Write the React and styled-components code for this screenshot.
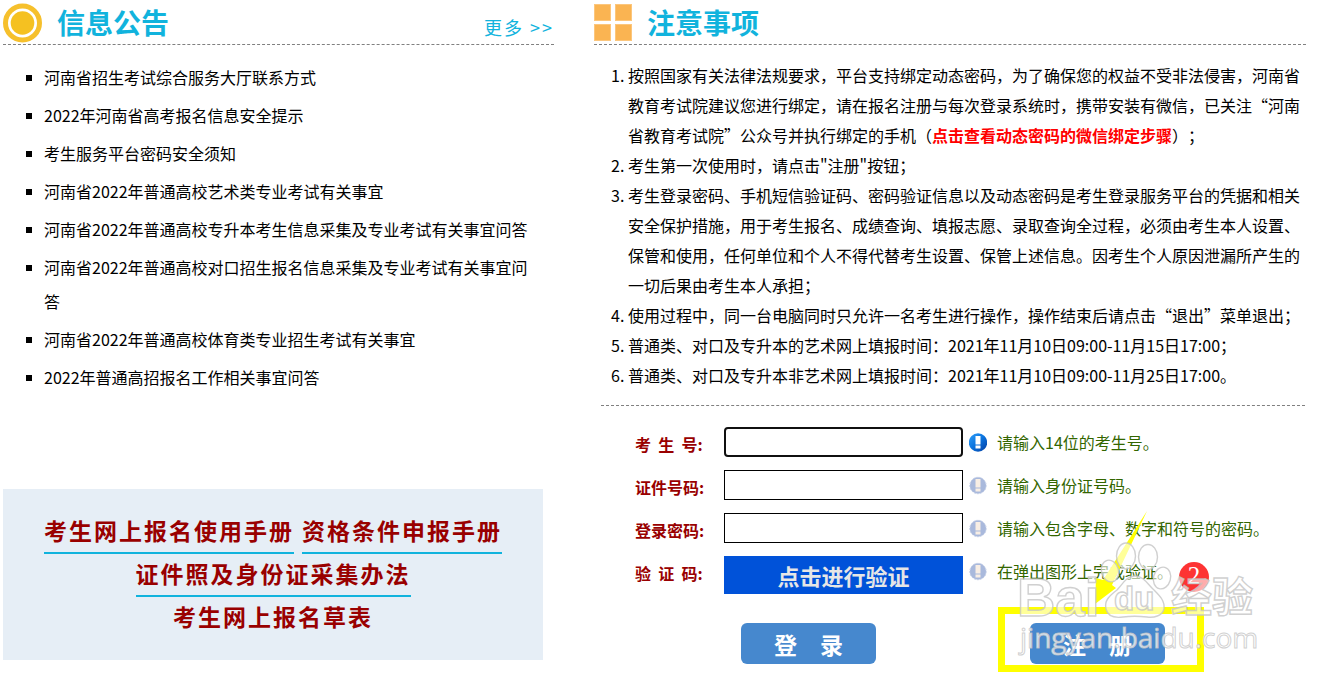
import React from "react";
import styled, { createGlobalStyle } from "styled-components";

const NOTICES = [
  "河南省招生考试综合服务大厅联系方式",
  "2022年河南省高考报名信息安全提示",
  "考生服务平台密码安全须知",
  "河南省2022年普通高校艺术类专业考试有关事宜",
  "河南省2022年普通高校专升本考生信息采集及专业考试有关事宜问答",
  "河南省2022年普通高校对口招生报名信息采集及专业考试有关事宜问答",
  "河南省2022年普通高校体育类专业招生考试有关事宜",
  "2022年普通高招报名工作相关事宜问答",
];

const SunIcon = () => (
  <svg width="39" height="40" viewBox="0 0 39 40" aria-hidden="true">
    <circle cx="19.5" cy="20" r="17" fill="#fff" stroke="#f6c02c" strokeWidth="5" />
    <circle cx="19.5" cy="20" r="11.8" fill="#f5c121" />
  </svg>
);

const BlocksIcon = () => (
  <svg width="38" height="39" viewBox="0 0 38 39" aria-hidden="true">
    <g fill="#fab452" stroke="#fcc67c" strokeWidth="1">
      <rect x="0.5" y="1.5" width="16" height="16" />
      <rect x="21.5" y="1.5" width="16" height="16" />
      <rect x="0.5" y="21.5" width="16" height="16" />
      <rect x="21.5" y="21.5" width="16" height="16" />
    </g>
  </svg>
);

const HintIcon = ({ active }) => (
  <svg width="18" height="30" viewBox="0 0 18 30" aria-hidden="true">
    <defs>
      <linearGradient id="hintBlue" x1="0" y1="0" x2="1" y2="1">
        <stop offset="0" stopColor="#2fa0fa" />
        <stop offset="0.5" stopColor="#0a72dd" />
        <stop offset="1" stopColor="#043c9f" />
      </linearGradient>
    </defs>
    <circle
      cx="9"
      cy="15.5"
      r={active ? 9.2 : 8.2}
      fill={active ? "url(#hintBlue)" : "#a9b9dc"}
      stroke={active ? "none" : "#c3cee6"}
      strokeDasharray="2 1"
    />
    <path
      d="M6.5 9h5v8.4h-5zM6.5 18.6h5v3h-5z"
      fill={active ? "#fff" : "#f8eee4"}
    />
  </svg>
);

const Watermark = () => (
  <svg width="260" height="130" viewBox="1010 535 260 130" aria-hidden="true">
    <g fill="#fff" fillOpacity="0.6" stroke="#c4c4c4" strokeOpacity="0.8" strokeWidth="1.4">
      <ellipse cx="1126" cy="556" rx="9.5" ry="13" />
      <ellipse cx="1148" cy="557" rx="9.5" ry="12.5" />
      <ellipse cx="1110" cy="571" rx="8.5" ry="11" transform="rotate(-15 1110 571)" />
      <ellipse cx="1162" cy="578" rx="8.5" ry="11" transform="rotate(15 1162 578)" />
      <path d="M1135 576c-9 0-12 8-18 14-8 6-13 11-11 19 2 8 10 9 17 8 8-1 15-1 24 0 7 1 15-1 17-8 1-8-4-13-10-19-6-5-10-14-19-14z" />
      <text x="1017" y="616" fontFamily="Liberation Sans, Arial, sans-serif" fontSize="53" fontWeight="700">
        Bai
      </text>
      <text x="1114" y="610" fontFamily="Liberation Sans, Arial, sans-serif" fontSize="33" fontWeight="700">
        du
      </text>
      <text x="1171" y="612" fontFamily="Noto Sans CJK SC, sans-serif" fontSize="41" fontWeight="700">
        经验
      </text>
      <text x="1020" y="648" fontFamily="Open Sans, sans-serif" fontSize="28" fillOpacity="0.75" strokeWidth="1">
        jingyan.baidu.com
      </text>
    </g>
  </svg>
);

const FormRow = ({ id, label, hint, active, type = "text" }) => (
  <Field>
    <Label htmlFor={id}>{label}</Label>
    <TextInput id={id} type={type} $active={active} />
    <HintIcon active={active} />
    <Hint>{hint}</Hint>
  </Field>
);

const App = () => (
  <>
    <GlobalStyle />
    <Page lang="zh-CN">
      <Column>
        <Header>
          <SunIcon />
          <Title>信息公告</Title>
          <MoreLink href="#more">更多 &gt;&gt;</MoreLink>
        </Header>
        <NoticeList>
          {NOTICES.map((notice) => (
            <li key={notice}>
              <a href="#notice">{notice}</a>
            </li>
          ))}
        </NoticeList>
        <Manuals>
          <ManualRow>
            <ManualLink href="#guide">考生网上报名使用手册</ManualLink>
            <ManualLink href="#qualification">资格条件申报手册</ManualLink>
          </ManualRow>
          <ManualRow>
            <ManualLink href="#photo">证件照及身份证采集办法</ManualLink>
          </ManualRow>
          <ManualRow>
            <ManualLink href="#draft" $plain>
              考生网上报名草表
            </ManualLink>
          </ManualRow>
        </Manuals>
      </Column>

      <Column>
        <Header>
          <BlocksIcon />
          <Title>注意事项</Title>
        </Header>
        <Rules>
          <li>
            按照国家有关法律法规要求，平台支持绑定动态密码，为了确保您的权益不受非法侵害，河南省教育考试院建议您进行绑定，请在报名注册与每次登录系统时，携带安装有微信，已关注“河南省教育考试院”公众号并执行绑定的手机（
            <BindLink href="#bind">点击查看动态密码的微信绑定步骤</BindLink>）；
          </li>
          <li>考生第一次使用时，请点击"注册"按钮；</li>
          <li>
            考生登录密码、手机短信验证码、密码验证信息以及动态密码是考生登录服务平台的凭据和相关安全保护措施，用于考生报名、成绩查询、填报志愿、录取查询全过程，必须由考生本人设置、保管和使用，任何单位和个人不得代替考生设置、保管上述信息。因考生个人原因泄漏所产生的一切后果由考生本人承担；
          </li>
          <li>使用过程中，同一台电脑同时只允许一名考生进行操作，操作结束后请点击“退出”菜单退出；</li>
          <li>普通类、对口及专升本的艺术网上填报时间：2021年11月10日09:00-11月15日17:00；</li>
          <li>普通类、对口及专升本非艺术网上填报时间：2021年11月10日09:00-11月25日17:00。</li>
        </Rules>
        <Form onSubmit={(e) => e.preventDefault()}>
          <FormRow id="ksh" label={"考\u00a0\u00a0生\u00a0\u00a0号:"} hint="请输入14位的考生号。" active />
          <FormRow id="zjhm" label="证件号码:" hint="请输入身份证号码。" />
          <FormRow id="dlmm" label="登录密码:" hint="请输入包含字母、数字和符号的密码。" type="password" />
          <Field>
            <Label htmlFor="yzm">{"验\u00a0\u00a0证\u00a0\u00a0码:"}</Label>
            <VerifyButton id="yzm" type="button">
              点击进行验证
            </VerifyButton>
            <HintIcon />
            <Hint>在弹出图形上完成验证。</Hint>
          </Field>
          <Actions>
            <ActionButton type="submit">登　录</ActionButton>
            <Register>
              <ActionButton type="button">注　册</ActionButton>
              <Frame />
              <Arrow width="56" height="96" viewBox="0 0 56 96" aria-hidden="true">
                <path d="M53 0 L9 69 L2 67 L1 93 L22 77 L18 74 Z" fill="#ff0" />
              </Arrow>
              <Badge>2</Badge>
              <WatermarkLayer>
                <Watermark />
              </WatermarkLayer>
            </Register>
          </Actions>
        </Form>
      </Column>
    </Page>
  </>
);

export default App;

const GlobalStyle = createGlobalStyle`
  * {
    box-sizing: border-box;
  }

  body {
    margin: 0;
    background-color: #fff;
    color: #000;
    font-family: "Noto Sans CJK SC", sans-serif;
    font-size: 16px;
    text-spacing-trim: space-all;
    overflow-x: hidden;
  }

  a {
    color: inherit;
    text-decoration: none;
  }

  button,
  input {
    font-family: inherit;
  }
`;

const Page = styled.main`
  display: grid;
  grid-template-columns: 551fr 712fr;
  column-gap: 40px;
  padding: 0 22px 20px 3px;
`;

const Column = styled.section`
  min-width: 0;
`;

const Header = styled.header`
  height: 45px;
  padding-top: 3px;
  display: flex;
  border-bottom: 1px dashed #808080;
`;

const Title = styled.h2`
  flex: 1;
  margin: 0 0 0 15px;
  color: #11b3dd;
  font-size: 28px;
  font-weight: bold;
  line-height: 38px;
`;

const MoreLink = styled.a`
  color: #11b3dd;
  font-size: 18px;
  letter-spacing: 2px;
  line-height: 48px;
`;

const NoticeList = styled.ul`
  list-style: none;
  margin: 15px 0 0;
  padding: 0 11px 0 41px;
  line-height: 34px;

  li {
    position: relative;
    margin-bottom: 4px;
  }

  li::before {
    content: "";
    position: absolute;
    top: 15px;
    left: -18px;
    width: 6px;
    height: 6px;
    background-color: #000;
  }
`;

const Manuals = styled.nav`
  margin: 95px 11px 0 0;
  padding: 22px 0 20px;
  background-color: #e6eef6;
`;

const ManualRow = styled.div`
  display: flex;
  justify-content: center;
  column-gap: 8px;
`;

const ManualLink = styled.a`
  color: #990000;
  font-size: 23px;
  font-weight: bold;
  letter-spacing: 2px;
  line-height: 39px;
  padding-bottom: 2px;
  border-bottom: 2px solid ${({ $plain }) => ($plain ? "transparent" : "#11b3dd")};
`;

const Rules = styled.ol`
  margin: 15px 0 0;
  padding: 0 0 0 34px;
  line-height: 30px;
`;

const BindLink = styled.a`
  color: #ff0000;
  font-weight: bold;
`;

const Form = styled.form`
  margin: 15px 1px 0 7px;
  padding: 21px 0 0 34px;
  border-top: 1px dashed #808080;
  display: flex;
  flex-direction: column;
  row-gap: 11px;
`;

const Field = styled.div`
  display: flex;
  align-items: flex-start;
`;

const Label = styled.label`
  width: 89px;
  padding-top: 2px;
  color: #990000;
  font-weight: bold;
  line-height: 30px;
  white-space: nowrap;
`;

const TextInput = styled.input`
  width: 239px;
  height: 30px;
  margin-right: 6px;
  padding: 0 6px;
  font-size: 16px;
  background-color: #fff;
  border: ${({ $active }) => ($active ? "2px solid #101010" : "1px solid #000")};
  border-radius: ${({ $active }) => ($active ? "4px" : "0")};
  outline: none;
`;

const Hint = styled.span`
  margin-left: 10px;
  color: #336600;
  line-height: 30px;
`;

const VerifyButton = styled.button`
  width: 239px;
  height: 38px;
  margin-right: 6px;
  padding: 0;
  border: none;
  background-color: #0052d9;
  color: #e6e6e6;
  font-size: 22px;
  font-weight: bold;
  cursor: pointer;
`;

const Actions = styled.div`
  display: flex;
  column-gap: 154px;
  margin-top: 18px;
  padding-left: 106px;
`;

const ActionButton = styled.button`
  width: 135px;
  height: 41px;
  padding: 0;
  border: none;
  border-radius: 6px;
  background-color: #4688ce;
  color: #fff;
  font-size: 23px;
  font-weight: bold;
  cursor: pointer;
`;

const Register = styled.div`
  position: relative;
`;

const Frame = styled.div`
  position: absolute;
  top: -16px;
  left: -32px;
  width: 206px;
  height: 65px;
  border: 7px solid #ff0;
  pointer-events: none;
`;

const Arrow = styled.svg`
  position: absolute;
  top: -112px;
  left: 64px;
  pointer-events: none;
`;

const Badge = styled.span`
  position: absolute;
  top: -61px;
  left: 149px;
  width: 30px;
  height: 30px;
  border-radius: 50%;
  background-color: #fd3333;
  color: #fff;
  font-family: "Liberation Serif", serif;
  font-size: 25px;
  line-height: 28px;
  text-align: center;
`;

const WatermarkLayer = styled.div`
  position: absolute;
  top: -88px;
  left: -20px;
  pointer-events: none;
`;
